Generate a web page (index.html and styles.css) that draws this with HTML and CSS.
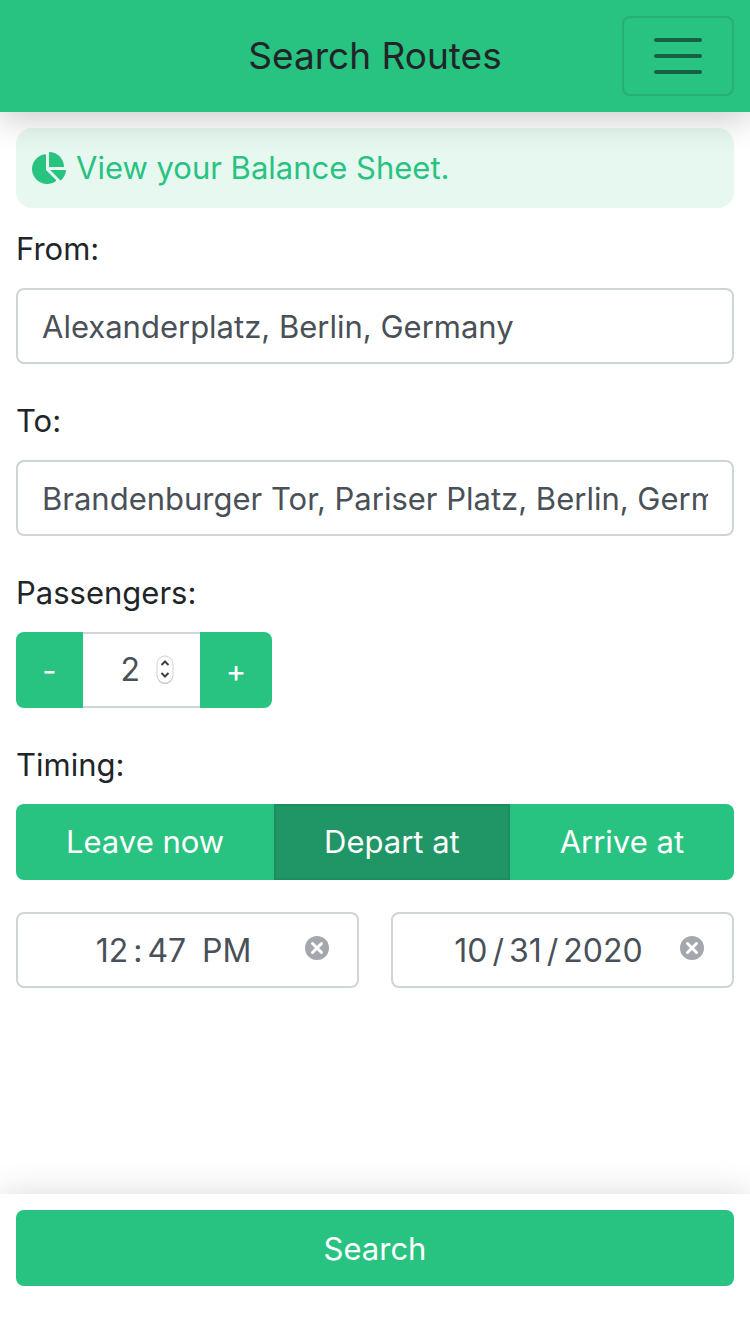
FILE: index.html
```html
<!DOCTYPE html>
<html lang="en">
<head>
<meta charset="utf-8">
<meta name="viewport" content="width=device-width, initial-scale=1">
<title>Search Routes</title>
<link rel="stylesheet" href="styles.css">
</head>
<body>
<header class="navbar">
  <h1 class="navbar-title">Search Routes</h1>
  <button class="navbar-toggle" type="button" aria-label="Open menu">
    <svg class="menu-icon" viewBox="0 0 60 60" aria-hidden="true"><path d="M8 14h44M8 30h44M8 46h44"/></svg>
  </button>
</header>
<form class="search">
  <main class="content">
    <a class="notice" href="#balance">
      <svg class="pie-icon" viewBox="0 0 544 512" aria-hidden="true"><path d="M527.79 288H290.5l158.03 158.03c6.04 6.04 15.98 6.53 22.19.68 38.7-36.46 65.32-85.61 73.13-140.86 1.34-9.46-6.51-17.85-16.06-17.85zm-15.83-64.8C503.72 103.74 408.26 8.28 288.8.04 279.68-.59 272 7.1 272 16.24V240h223.77c9.14 0 16.82-7.68 16.19-16.8zM224 288V50.71c0-9.55-8.39-17.4-17.84-16.06C86.99 51.49-4.1 155.6.14 280.37 4.5 408.51 114.83 513.59 243.03 511.98c50.4-.63 96.97-16.87 135.26-44.03 7.9-5.6 8.42-17.23 1.57-24.08L224 288z"/></svg>
      <span>View your Balance Sheet.</span>
    </a>
    <div class="field">
      <label class="field-label" for="from">From:</label>
      <input class="control" id="from" type="text" value="Alexanderplatz, Berlin, Germany">
    </div>
    <div class="field">
      <label class="field-label" for="to">To:</label>
      <input class="control" id="to" type="text" value="Brandenburger Tor, Pariser Platz, Berlin, Germany">
    </div>
    <div class="field">
      <label class="field-label" for="passengers">Passengers:</label>
      <div class="stepper">
        <button class="step step-minus" type="button" aria-label="Fewer passengers">-</button>
        <div class="count">
          <input class="count-input" id="passengers" type="number" min="1" value="2">
          <svg class="spinner" viewBox="0 0 18 30" aria-hidden="true"><rect class="spinner-shade" x="1" y="2" width="16" height="27" rx="8"/><rect class="spinner-body" x="1" y="1" width="16" height="27" rx="8"/><path d="M5.500 10l3.500-3.500 3.500 3.500M5.500 18l3.500 3.500 3.500-3.500"/></svg>
        </div>
        <button class="step step-plus" type="button" aria-label="More passengers">+</button>
      </div>
    </div>
    <fieldset class="timing">
      <legend class="field-label">Timing:</legend>
      <div class="segments">
        <label class="segment"><input class="segment-radio" type="radio" name="timing">Leave now</label>
        <label class="segment"><input class="segment-radio" type="radio" name="timing" checked>Depart at</label>
        <label class="segment"><input class="segment-radio" type="radio" name="timing">Arrive at</label>
      </div>
    </fieldset>
    <div class="when">
      <div class="moment">
        <input class="moment-input time-input" type="time" value="12:47" aria-label="Time">
        <button class="clear" type="button" aria-label="Clear time"><svg class="clear-icon" viewBox="0 0 24 24" aria-hidden="true"><circle cx="12" cy="12" r="12"/><path d="M7.500 7.500l9 9M16.500 7.500l-9 9"/></svg></button>
      </div>
      <div class="moment">
        <input class="moment-input date-input" type="date" value="2020-10-31" aria-label="Date">
        <button class="clear" type="button" aria-label="Clear date"><svg class="clear-icon" viewBox="0 0 24 24" aria-hidden="true"><circle cx="12" cy="12" r="12"/><path d="M7.500 7.500l9 9M16.500 7.500l-9 9"/></svg></button>
      </div>
    </div>
  </main>
  <footer class="actions">
    <button class="submit" type="submit">Search</button>
  </footer>
</form>
</body>
</html>
```
FILE: styles.css
```css
:root {
  --green: #28c281;
  --green-dark: #209666;
  --green-edge: #1e8c5f;
  --ink: #212529;
  --text: #495057;
  --border: #ced4da;
}

* { box-sizing: border-box; }

body {
  margin: 0;
  min-height: 100vh;
  display: flex;
  flex-direction: column;
  background: #fff;
  color: var(--ink);
  font: 400 31px/48px Inter, "Liberation Sans", sans-serif;
}

button, input { font: inherit; margin: 0; }
button { cursor: pointer; }

.navbar {
  display: grid;
  grid-template-columns: 112px 1fr 112px;
  align-items: center;
  padding: 16px;
  background: var(--green);
  box-shadow: 0 8px 32px rgba(0, 0, 0, 0.2);
}
.navbar-title {
  grid-column: 2;
  margin: 0;
  font-size: 37px;
  font-weight: 400;
  line-height: 48px;
  text-align: center;
}
.navbar-toggle {
  display: flex;
  align-items: center;
  justify-content: center;
  height: 80px;
  padding: 0;
  border: 2px solid rgba(33, 37, 41, 0.12);
  border-radius: 8px;
  background: transparent;
}
.menu-icon {
  width: 60px;
  height: 60px;
  fill: none;
  stroke: #166144;
  stroke-width: 4;
  stroke-linecap: round;
}

.search {
  flex: 1;
  display: flex;
  flex-direction: column;
}
.content {
  flex: 1;
  display: flex;
  flex-direction: column;
  padding: 16px;
}

.notice {
  display: flex;
  align-items: center;
  gap: 10px;
  margin-bottom: 16px;
  padding: 16px;
  border-radius: 16px;
  background: rgba(40, 194, 129, 0.11);
  color: var(--green);
  text-decoration: none;
}
.pie-icon {
  width: 34px;
  height: 32px;
  fill: currentColor;
}

.field { margin-bottom: 32px; }
.field-label {
  display: block;
  margin-bottom: 14px;
  padding: 0;
  line-height: 50px;
}
.control {
  display: block;
  width: 100%;
  height: 76px;
  padding: 0 24px;
  border: 2px solid var(--border);
  border-radius: 8px;
  background: #fff;
  color: var(--text);
}

.stepper {
  display: flex;
  width: 256px;
  height: 76px;
}
.step {
  padding: 2px 24px 0;
  border: 0;
  background: var(--green);
  color: #fff;
}
.step-minus {
  width: 67px;
  border-radius: 8px 0 0 8px;
}
.step-plus {
  width: 72px;
  border-radius: 0 8px 8px 0;
}
.count {
  flex: 1;
  display: flex;
  align-items: center;
  justify-content: flex-end;
  gap: 16px;
  padding-right: 26px;
  border: solid var(--border);
  border-width: 2px 0;
}
.count-input {
  width: 40px;
  padding: 0;
  border: 0;
  background: transparent;
  color: var(--text);
  font-size: 32px;
  text-align: right;
  appearance: textfield;
}
.count-input::-webkit-inner-spin-button { appearance: none; margin: 0; }
.spinner {
  width: 18px;
  height: 30px;
  fill: none;
  stroke: #404040;
  stroke-width: 2;
}
.spinner-shade { fill: #b8b8b8; stroke: none; }
.spinner-body { fill: #fff; stroke: #d4d4d4; stroke-width: 1; }

.timing {
  min-width: 0;
  margin: 0 0 32px;
  padding: 0;
  border: 0;
}
.segments {
  display: flex;
  overflow: hidden;
  border-radius: 8px;
  background: var(--green);
}
.segment {
  position: relative;
  flex: 1 1 auto;
  padding: 12px 24px;
  border: 2px solid transparent;
  color: #fff;
  text-align: center;
  cursor: pointer;
}
.segment:has(:checked) {
  border-color: var(--green-edge);
  background: var(--green-dark);
}
.segment-radio {
  position: absolute;
  inset: 0;
  margin: 0;
  opacity: 0;
}

.when {
  display: grid;
  grid-template-columns: 1fr 1fr;
  gap: 32px;
}
.moment {
  display: flex;
  align-items: center;
  height: 76px;
  padding: 0 28px 0 24px;
  border: 2px solid var(--border);
  border-radius: 8px;
}
.moment-input {
  flex: 1;
  min-width: 0;
  padding: 2px 0 0;
  border: 0;
  background: transparent;
  color: var(--text);
  font-size: 32px;
}
.moment-input::-webkit-calendar-picker-indicator { display: none; }
.moment-input::-webkit-datetime-edit {
  text-align: center;
  padding: 0;
}
.moment-input::-webkit-datetime-edit-fields-wrapper { justify-content: center; }
.moment-input::-webkit-datetime-edit-text { padding: 0 4px; }
.clear {
  display: flex;
  padding: 0 0 4px;
  border: 0;
  background: transparent;
}
.clear-icon {
  width: 24px;
  height: 24px;
  fill: #a4a7ab;
  stroke: #fff;
  stroke-width: 3;
  stroke-linecap: round;
}
.clear-icon circle { stroke: none; }

.actions {
  position: sticky;
  bottom: 0;
  padding: 16px 16px 48px;
  background: #fff;
  box-shadow: 0 0 32px rgba(0, 0, 0, 0.15);
}
.submit {
  width: 100%;
  height: 76px;
  padding: 2px 24px 0;
  border: 0;
  border-radius: 8px;
  background: var(--green);
  color: #fff;
}
```
